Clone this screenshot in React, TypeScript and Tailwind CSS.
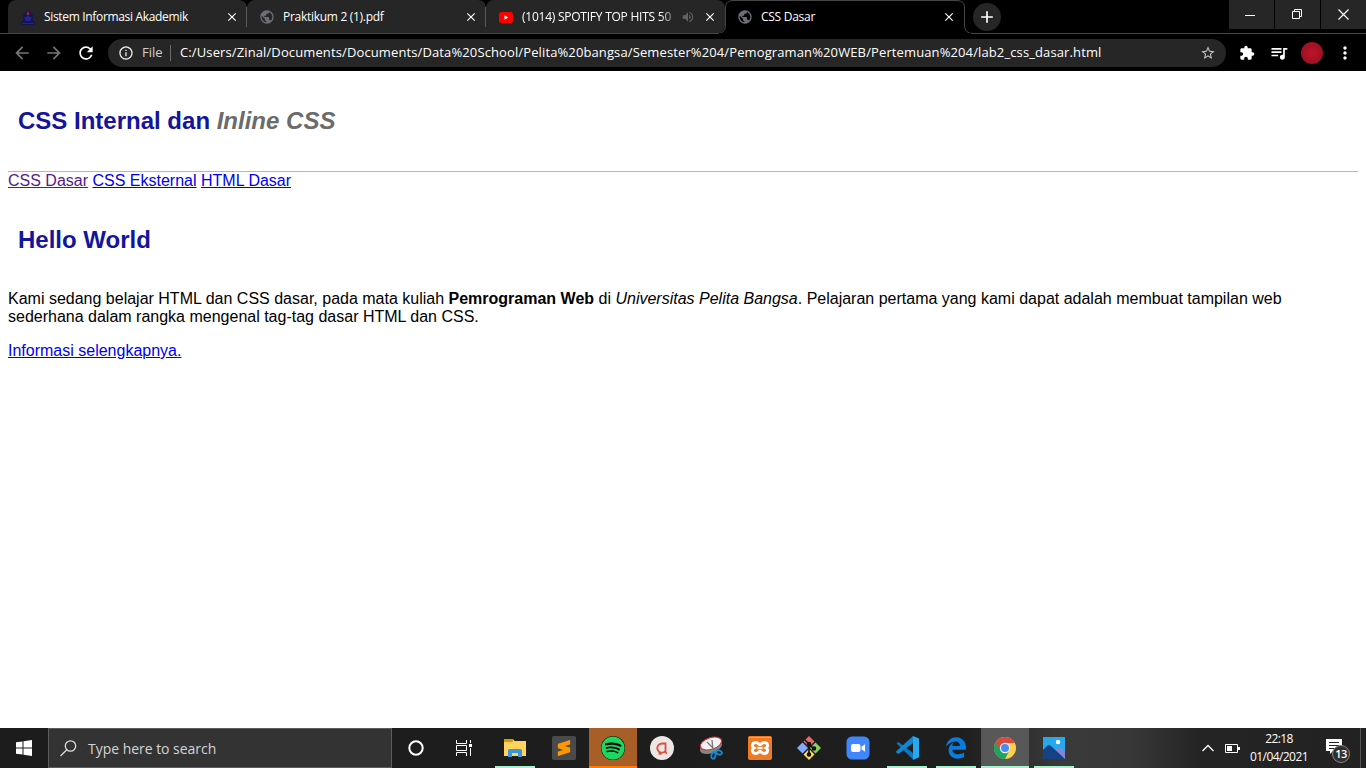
import type { ReactNode } from 'react';
import { MdArrowBack, MdArrowForward, MdRefresh, MdInfoOutline, MdStarBorder, MdExtension, MdQueueMusic, MdMoreVert, MdPublic, MdVolumeUp, MdClose, MdAdd } from 'react-icons/md';
import { FaSpotify, FaEdgeLegacy } from 'react-icons/fa6';
import { SiSublimetext } from 'react-icons/si';

function CampusIcon() {
  return (
    <svg width="14" height="16" viewBox="0 0 14 16">
      <path d="M7 0 12 6v6l2 2v2H0v-2l2-2V6Z" fill="#171552" />
      <path d="M7 1.5 8.5 5 7 6.5 5.5 5Z" fill="#a8281c" />
      <path d="M3 8.5 7 7l4 1.5L9 12H5Z" fill="#25259a" />
      <path d="M1 14.5h12" stroke="#23238a" />
    </svg>
  );
}

function YoutubeIcon() {
  return (
    <svg width="16" height="16" viewBox="0 0 16 16">
      <rect x="1" y="3" width="14" height="11" rx="2.5" fill="#f00" />
      <path d="M6.5 6.2 10.2 8.5 6.5 10.8Z" fill="#fff" />
    </svg>
  );
}

function Tab({ icon, title, sound, tight, last }: { icon: ReactNode; title: string; sound?: boolean; tight: string; last?: boolean }) {
  return (
    <div className={`flex h-[33px] w-[239px] shrink-0 items-center rounded-t-lg bg-[#262626] pl-3 ${last ? 'rounded-br-lg' : ''}`}>
      <span className="flex w-4 justify-center">{icon}</span>
      <span className={`ml-2 text-xs whitespace-nowrap text-white ${tight} ${sound ? 'w-[150px] [mask-image:linear-gradient(to_right,black_92%,rgba(0,0,0,.4))]' : 'flex-1'}`}>{title}</span>
      {sound && <MdVolumeUp className="mr-auto ml-[9px] size-3.5 shrink-0 text-[#5f6368]" />}
      <MdClose className={`size-3.5 shrink-0 text-white ${last ? 'mr-2' : 'mr-[7px]'}`} />
      {!last && <span className="h-5 w-px bg-[#5a5a5a]" />}
    </div>
  );
}

function TaskButton({ children, open }: { children: ReactNode; open?: boolean }) {
  return (
    <div className="flex h-10 w-12 shrink-0 flex-col items-center">
      <div className="flex h-[38px] items-center pt-0.5">{children}</div>
      {open && <div className="h-0.5 w-10 bg-[#a2f5cb]" />}
    </div>
  );
}

export default function App() {
  return (
    <div className="flex h-[768px] w-[1366px] flex-col overflow-hidden bg-white font-['Open_Sans',sans-serif]">
      <header className="h-[71px] shrink-0 bg-black">
        <div className="flex h-[34px] border-b border-[#454545] pl-2">
          <Tab icon={<CampusIcon />} title="Sistem Informasi Akademik" tight="tracking-[-0.33px]" />
          <Tab icon={<MdPublic className="size-4 text-[#6c7075]" />} title="Praktikum 2 (1).pdf" tight="tracking-[-0.29px]" />
          <Tab icon={<YoutubeIcon />} title="(1014) SPOTIFY TOP HITS 50" sound last tight="tracking-[-0.24px]" />
          <div className="relative flex h-[34px] w-[240px] shrink-0 items-center pl-3">
            <svg className="absolute top-0 -left-2" width="256" height="34" viewBox="0 0 256 34">
              <path d="M0 33.5Q8.500 33.500 8.500 25V8Q8.500.500 16 .500H240Q247.500.500 247.500 8V25Q247.500 33.500 256 33.500" fill="#000" stroke="#454545" />
              <path d="M2 33.500H254" stroke="#000" />
            </svg>
            <MdPublic className="relative size-4 text-[#6c7075]" />
            <span className="relative ml-2 flex-1 text-xs tracking-[-0.27px] text-white">CSS Dasar</span>
            <MdClose className="relative mr-[9px] size-3.5 text-white" />
          </div>
          <div className="mt-[3px] ml-2 flex size-7 items-center justify-center rounded-full bg-[#262626]">
            <MdAdd className="size-5 text-white" />
          </div>
          <div className="ml-auto flex h-[29px] gap-px">
            <div className="flex w-[45px] items-center justify-center bg-[#262626] pr-[3px]"><svg width="10" height="10"><path d="M0 5.500h10" stroke="#fff" /></svg></div>
            <div className="flex w-[45px] items-center justify-center bg-[#262626] pr-px pb-px"><svg width="10" height="10" fill="none" stroke="#fff"><path d="M.500 2.500h7v7h-7zM2.500 2.500v-2h7v7h-2" /></svg></div>
            <div className="flex w-[45px] items-center justify-center bg-[#262626] pr-px pb-px"><svg width="11" height="11" stroke="#fff" strokeWidth="1.2"><path d="m.500.500 10 10m0-10-10 10" /></svg></div>
          </div>
        </div>
        <div className="flex h-[37px] items-center text-white">
          <MdArrowBack className="ml-3 size-5 text-[#757575]" />
          <MdArrowForward className="ml-3 size-5 text-[#757575]" />
          <MdRefresh className="ml-3 size-5" />
          <div className="ml-3 flex h-7 w-[1118px] items-center rounded-full bg-[#262626] pl-2.5 text-[13px]">
            <MdInfoOutline className="size-4 text-[#e8e8e8]" />
            <span className="ml-2 w-[21px] text-[#d0d0d0]">File</span>
            <span className="ml-[7px] h-4 w-px bg-[#6a6a6a]" />
            <span className="ml-[9px] flex-1 tracking-[0.118px] whitespace-nowrap">C:/Users/Zinal/Documents/Documents/Data%20School/Pelita%20bangsa/Semester%204/Pemograman%20WEB/Pertemuan%204/lab2_css_dasar.html</span>
            <MdStarBorder className="mr-[10px] size-4 text-[#c4c4c4]" />
          </div>
          <MdExtension className="ml-[13px] size-4" />
          <MdQueueMusic className="ml-[14px] size-5" />
          <span className="ml-3 size-[22px] rounded-full bg-[radial-gradient(#c0132a,#8d1020)]" />
          <MdMoreVert className="ml-3 size-5" />
        </div>
      </header>

      <main className="flex-1 px-2 pt-9 font-['Liberation_Sans',Arial,sans-serif] text-base leading-[18px] text-black">
        <h1 className="px-2.5 text-2xl leading-[27px] font-bold text-[#14149c]">CSS Internal dan <i className="text-[#6b6b6b]">Inline CSS</i></h1>
        <nav className="mt-[37px] border-t border-[#77ccef]">
          <a className="text-[#551a8b] underline">CSS Dasar</a>{' '}
          <a className="text-[#0000ee] underline">CSS Eksternal</a>{' '}
          <a className="text-[#0000ee] underline">HTML Dasar</a>
        </nav>
        <h2 className="mt-9 px-2.5 text-2xl leading-[27px] font-bold text-[#14149c]">Hello World</h2>
        <p className="mt-[37px]">Kami sedang belajar HTML dan CSS dasar, pada mata kuliah <b>Pemrograman Web</b> di <i>Universitas Pelita Bangsa</i>. Pelajaran pertama yang kami dapat adalah membuat tampilan web sederhana dalam rangka mengenal tag-tag dasar HTML dan CSS.</p>
        <a className="mt-4 block text-[#0000ee] underline">Informasi selengkapnya.</a>
      </main>

      <footer className="flex h-10 shrink-0 bg-[linear-gradient(90deg,#1c1c1c_0,#1e1e1e_960px,#3a3a3a_1060px,#383838_1130px,#242424_1200px,#222_100%)] text-white">
        <div className="flex w-12 items-center justify-center">
          <svg width="16" height="16" fill="#fff"><path d="M0 2.300 6.500 1.400v6.200H0zM7.500 1.200 16 0v7.600H7.500zM0 8.400h6.500v6.200L0 13.700zM7.500 8.400H16V16l-8.500-1.200z" /></svg>
        </div>
        <div className="flex w-[344px] items-center border border-[#5c5c5c] bg-[#333] pl-[11px]">
          <svg width="17" height="17" fill="none" stroke="#ddd" strokeWidth="1.300"><circle cx="10.500" cy="6" r="5.200" /><path d="M6.800 9.800.500 16" /></svg>
          <span className="ml-[11px] pt-0.5 text-sm tracking-[-0.03px] text-[#d4d4d4]">Type here to search</span>
        </div>
        <TaskButton><svg width="16" height="16"><circle cx="8" cy="8" r="6.700" fill="none" stroke="#fff" strokeWidth="2" /></svg></TaskButton>
        <TaskButton><svg width="16" height="16" fill="none" stroke="#fff"><path d="M.500 0v3.500h10V0M.500 16v-3.500h10V16M.500 5.500h10v5H.500zM14.500 0v3M14.500 8v8" /><path d="M13 4h3v3h-3z" fill="#fff" stroke="none" /></svg></TaskButton>
        <div className="ml-[3px] flex gap-px">
          <TaskButton open>
            <svg width="22" height="18"><path d="M0 0h9l1.500 2H22V17H0z" fill="#ffd35e" /><path d="M0 0h9v2L8 3H0z" fill="#dd9700" /><path d="M4 18v-7l1.500-1h11l1.500 1v7h-4v-4H8v4z" fill="#3b96dc" /></svg>
          </TaskButton>
          <TaskButton><span className="flex size-6 items-center justify-center rounded-[2px] bg-[#4a4a4a]"><SiSublimetext className="size-4 text-[#ff9800]" /></span></TaskButton>
          <div className="flex h-10 w-12 flex-col items-center border-b-2 border-[#ff7a00] bg-[#a85e27]">
            <span className="mt-2 flex size-6 rounded-full bg-black"><FaSpotify className="size-6 text-[#1ed760]" /></span>
          </div>
          <TaskButton><svg width="24" height="24"><circle cx="12" cy="12" r="12" fill="#ece7e4" /><path d="M17 17.500q-1.500-.500-1.500-2.500V7.500h-3.500a4.600 4.600 0 1 0 3.500 7.500M8.500 17.500q1 .500 3 .300" fill="none" stroke="#dc4f40" strokeWidth="1.800" /></svg></TaskButton>
          <TaskButton>
            <svg width="24" height="24"><ellipse cx="12" cy="11" rx="11.500" ry="6" transform="rotate(-20 12 11)" fill="#858585" /><ellipse cx="12" cy="7.500" rx="11" ry="5.800" transform="rotate(-18 12 7.500)" fill="#f3f3f3" stroke="#d42c36" /><path d="m8 6 8 8M13 4l1 10" stroke="#777" strokeWidth="1.300" /><g fill="none" stroke="#148bd2" strokeWidth="1.800"><ellipse cx="14.500" cy="19.500" rx="2" ry="3.300" transform="rotate(15 14.500 19.500)" /><ellipse cx="20" cy="16.500" rx="3" ry="2" transform="rotate(20 20 16.500)" /></g></svg>
          </TaskButton>
          <TaskButton>
            <svg width="24" height="24"><rect width="24" height="24" rx="2" fill="#ef7a26" /><path d="M1 1.500h22" stroke="#f9a768" /><path d="M8 6.500c2 0 2.500 2 4 2s2-2 4-2c4 0 4.500 4 2 5.500 2.500 1.500 2 5.500-2 5.500-2 0-2.500-2-4-2s-2 2-4 2c-4 0-4.500-4-2-5.500-2.500-1.500-2-5.500 2-5.500z" fill="none" stroke="#fff" strokeWidth="3" /><path d="M9.500 12h5" stroke="#fff" strokeWidth="2.500" /></svg>
          </TaskButton>
          <TaskButton>
            <svg width="24" height="24"><path d="m12 0 5.500 5.500L12 11 6.500 5.500z" fill="#f0656a" /><path d="m5.500 6.500 5.500 5.500-5.500 5.500L0 12z" fill="#80a9ff" /><path d="m18.500 6.500L24 12l-5.500 5.500L13 12z" fill="#8bd45b" /><path d="m12 13 5.500 5.500L12 24l-5.500-5.500z" fill="#ffd967" /><g fill="#111" stroke="#111" strokeWidth="1.600"><path d="m8 4 4 4v11M12 8l5 5" fill="none" /><circle cx="12" cy="8" r="1.500" /><circle cx="12" cy="18.500" r="1.500" /><circle cx="17" cy="12.500" r="1.500" /></g></svg>
          </TaskButton>
          <TaskButton><svg width="24" height="24"><rect x=".500" y=".500" width="23" height="23" rx="5.500" fill="#4087fb" /><rect x="5" y="8" width="9.500" height="8" rx="2" fill="#fff" /><path d="M15.500 10.700 19 8.300v7.400l-3.500-2.400z" fill="#fff" /></svg></TaskButton>
          <TaskButton open>
            <svg width="24" height="24"><path d="m1.500 7.200 2-1.300L18 17v6.500z" fill="#0a76c4" /><path d="M.500 16 18 0v7L3.500 18z" fill="#1486d0" /><path d="m18 0 6 2.500v18.800L18 24z" fill="#2aa8ef" /></svg>
          </TaskButton>
          <TaskButton open><FaEdgeLegacy className="size-[22px] text-[#0b7cdb]" /></TaskButton>
          <div className="flex h-10 w-12 flex-col items-center border-b-2 border-[#a2f5cb] bg-[#585858]">
            <svg className="mt-[9px]" width="22" height="22" viewBox="-11 -11 22 22"><circle r="11" fill="#fcd24a" /><path d="M0-5H9.800A11 11 0 0 0-9.530-5.500L-4.330 2.500 0 0z" fill="#da4a3e" /><path d="M-9.530-5.500A11 11 0 0 0 0 11L4.330 2.500 0 0z" fill="#1fa363" /><path d="M-9.530-5.500-4.330 2.500 0-5z" fill="#da4a3e" /><circle r="5.200" fill="#f4f4f4" /><circle r="4" fill="#4a8af4" /></svg>
          </div>
          <TaskButton open>
            <svg width="22" height="22"><path d="M0 0h22v22H0z" fill="#25a9ec" /><path d="m11 15 6-5 5 4v8H11z" fill="#7f86d8" /><path d="m0 13 4-4q2-2 4 0l14 13H0z" fill="#154282" /><circle cx="15" cy="5" r="2.200" fill="#fff" /></svg>
          </TaskButton>
        </div>
        <div className="ml-auto flex items-center">
          <svg width="12" height="8" fill="none" stroke="#fff" strokeWidth="1.300"><path d="m.500 7L6 1.500 11.500 7" /></svg>
          <svg className="ml-[11px]" width="15" height="9"><path d="M.500.500h12v8H.500z" fill="none" stroke="#fff" /><path d="M2 2h5v5H2zM13 3h2v3h-2z" fill="#fff" /></svg>
          <div className="ml-2 flex w-[62px] flex-col items-center text-xs leading-[18px]"><span className="tracking-[-0.6px]">22:18</span><span className="tracking-[-0.57px]">01/04/2021</span></div>
          <svg className="mt-1 ml-[14px]" width="26" height="26"><path d="M2 2h16v12h-9l-3 3v-3H2z" fill="#fff" /><path d="M5 5.500h10M5 8.500h10M5 11.500h6" stroke="#222" /><circle cx="17" cy="17" r="8.500" fill="#303030" stroke="#888" /><text x="17" y="21" fill="#fff" fontSize="11" fontWeight="600" textAnchor="middle" letterSpacing="-.500">13</text></svg>
          <span className="ml-[10px] h-10 w-px bg-[#555]" />
          <span className="w-[5px] shrink-0" />
        </div>
      </footer>
    </div>
  );
}
